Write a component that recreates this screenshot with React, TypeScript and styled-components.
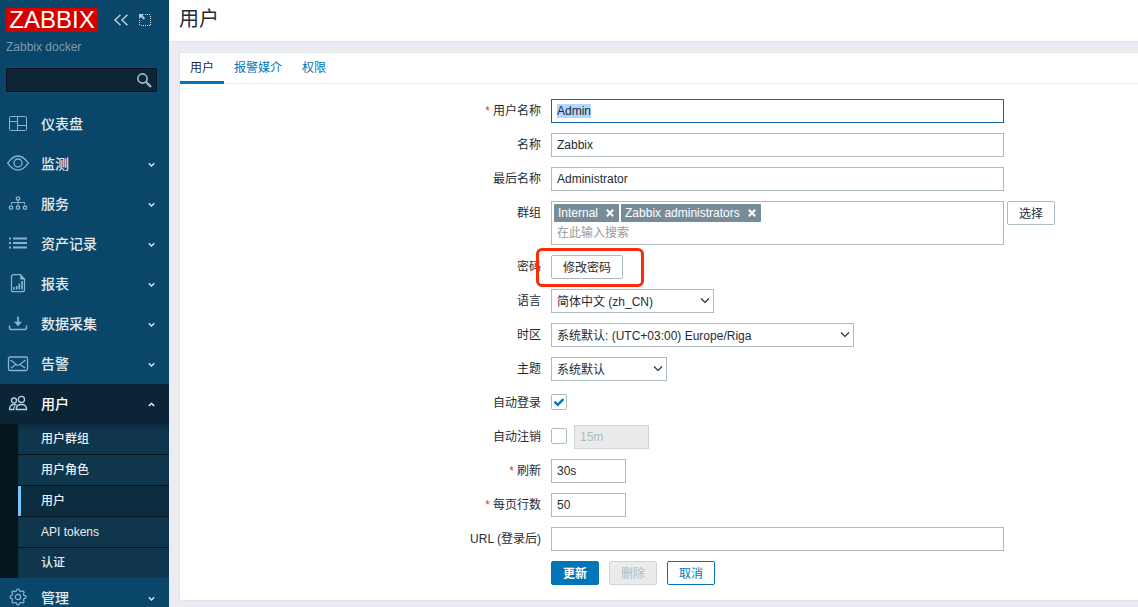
import React, { useEffect, useRef, useState } from "react";
import styled, { createGlobalStyle, css } from "styled-components";

const GlobalStyle = createGlobalStyle`
  *, *::before, *::after { box-sizing: border-box; }
  body {
    margin: 0;
    background: #ebecf1;
    color: #1f2c33;
    font: 12px/18px "Liberation Sans", Arial, "Noto Sans CJK SC", sans-serif;
  }
  button, input, select { font: inherit; color: inherit; margin: 0; }
  ::selection { background: #b3d7fe; color: #1f2c33; }
`;

/* ---------- layout ---------- */

const Page = styled.div`
  display: flex;
  min-height: 100vh;
`;

const Sidebar = styled.aside`
  position: sticky;
  top: 0;
  flex: none;
  width: 169px;
  height: 100vh;
  overflow: hidden;
  background: #0a466a;
  color: #e3eaee;
`;

const Main = styled.main`
  flex: 1;
  min-width: 0;
`;

/* ---------- sidebar header ---------- */

const Brand = styled.div`
  display: flex;
  align-items: center;
  padding: 8px 6px 0;
`;

const Logo = styled.a`
  width: 92px;
  height: 24px;
  margin-right: 15px;
  background: #d40000;
  color: #fff;
  font-size: 24px;
  line-height: 24px;
  text-align: center;
  text-decoration: none;
`;

const IconButton = styled.button`
  display: flex;
  align-items: center;
  justify-content: center;
  width: 16px;
  height: 24px;
  padding: 0;
  border: 0;
  background: none;
  color: #b4cbd8;
  cursor: pointer;
  & + & { margin-left: 8px; }
`;

const ServerName = styled.div`
  padding: 6px 6px 0;
  color: #7d9aab;
`;

const Search = styled.form`
  display: flex;
  height: 24px;
  margin: 12px 12px 12px 6px;
  border: 1px solid #06131c;
  border-radius: 2px;
  background: #0c2637;
`;

const SearchInput = styled.input`
  flex: 1;
  min-width: 0;
  padding: 0 5px;
  border: 0;
  outline: 0;
  background: none;
`;

const SearchButton = styled.button`
  display: flex;
  align-items: center;
  padding: 0 4px;
  border: 0;
  background: none;
  color: #a3bac7;
`;

/* ---------- menu ---------- */

const Menu = styled.ul`
  margin: 0;
  padding: 0;
  list-style: none;
`;

const MenuLink = styled.a<{ $open?: boolean }>`
  display: flex;
  align-items: center;
  height: 40px;
  padding: 0 14px 0 8px;
  background: ${(p) => (p.$open ? "#0b2536" : "transparent")};
  color: ${(p) => (p.$open ? "#fff" : "#e3eaee")};
  font-size: 14px;
  font-weight: 500;
  text-decoration: none;
  > svg:first-child { color: ${(p) => (p.$open ? "#b0d4e8" : "#8ab4cc")}; }
`;

const MenuText = styled.span`
  flex: 1;
  padding-left: 13px;
`;

const SubMenu = styled.ul`
  margin: 0;
  padding: 0 0 0 18px;
  list-style: none;
  background: #06141d;
`;

const SubItem = styled.li`
  & + & { border-top: 1px solid #06141d; }
  &:first-child a { background: linear-gradient(#0c2c40, #0f364c 8px); }
`;

const SubLink = styled.a<{ $selected?: boolean }>`
  display: block;
  height: 30px;
  padding-left: 20px;
  border-left: 3px solid ${(p) => (p.$selected ? "#78c4f8" : "transparent")};
  background: ${(p) => (p.$selected ? "#0b2b3f" : "#0f364c")};
  color: #e9eff2;
  font-weight: 500;
  line-height: 30px;
  text-decoration: none;
`;

/* ---------- page header and tabs ---------- */

const PageHeader = styled.header`
  height: 42px;
  padding: 0 10px;
  border-bottom: 1px solid #dfe4e7;
  background: #fff;
`;

const Title = styled.h1`
  margin: 0;
  font-size: 20px;
  font-weight: 400;
  line-height: 38px;
`;

const Panel = styled.section`
  margin: 10px 0 0 10px;
  border: 1px solid #dfe4e7;
  border-right: 0;
  background: #fff;
`;

const Tabs = styled.nav`
  display: flex;
  height: 31px;
  border-bottom: 1px solid #ebeef0;
`;

const Tab = styled.a<{ $active?: boolean }>`
  height: 31px;
  padding: 0 10px;
  border-bottom: 3px solid ${(p) => (p.$active ? "#0275b8" : "transparent")};
  color: ${(p) => (p.$active ? "#1f2c33" : "#0275b8")};
  line-height: 30px;
  text-decoration: none;
`;

/* ---------- form ---------- */

const Form = styled.form`
  display: grid;
  grid-template-columns: minmax(90px, 361px) minmax(0, 1fr);
  gap: 10px;
  padding: 15px 10px 15px 0;
`;

const Label = styled.label<{ $required?: boolean }>`
  line-height: 24px;
  text-align: right;
  ${(p) =>
    p.$required &&
    css`
      &::before {
        content: "*";
        margin-right: 3px;
        color: #e33734;
      }
    `}
`;

const Field = styled.div<{ $gap?: number }>`
  grid-column: 2;
  display: flex;
  align-items: center;
  gap: ${(p) => p.$gap ?? 0}px;
  min-height: 24px;
`;

const TopField = styled(Field)`
  align-items: flex-start;
`;

const TextInput = styled.input<{ $short?: boolean }>`
  width: ${(p) => (p.$short ? "75px" : "100%")};
  max-width: 453px;
  height: 24px;
  padding: 0 5px;
  border: 1px solid #acbbc2;
  border-radius: 0;
  outline: 0;
  background: #fff;
  &:focus { border-color: #0f66a0; }
  &:disabled {
    border-color: #ccd5d9;
    background: #ebebeb;
    color: #acbbc2;
  }
`;

const MultiSelect = styled.div`
  width: 100%;
  max-width: 453px;
  height: 44px;
  padding: 2px;
  border: 1px solid #acbbc2;
`;

const Tags = styled.div`
  display: flex;
  gap: 2px;
`;

const Tag = styled.span`
  display: flex;
  align-items: center;
  height: 18px;
  padding-left: 4px;
  border-radius: 1px;
  background: #768d99;
  color: #fff;
`;

const TagRemove = styled.button`
  display: flex;
  align-items: center;
  height: 18px;
  padding: 0 5px 0 8px;
  border: 0;
  background: none;
`;

const TagInput = styled.input`
  display: block;
  width: 100%;
  height: 20px;
  padding: 2px 3px 0;
  border: 0;
  outline: 0;
  background: none;
  &::placeholder { color: #999; }
`;

type Kind = "primary" | "secondary" | "plain";

const kinds = {
  primary: css`border-color: #0275b8; background: #0275b8; color: #fff; font-weight: 700;`,
  secondary: css`border-color: #0275b8; background: #fff; color: #0275b8;`,
  plain: css`border-color: #acbbc2; background: #fff; color: #1f2c33;`,
};

const Button = styled.button<{ $kind: Kind }>`
  flex: none;
  height: 24px;
  padding: 2px 11px 0;
  border: 1px solid;
  border-radius: 2px;
  line-height: 20px;
  cursor: pointer;
  ${(p) => kinds[p.$kind]}
  &:disabled {
    border-color: #ccd5d9;
    background: #ebebeb;
    color: #acbbc2;
    cursor: default;
  }
`;

const Marked = styled.div`
  position: relative;
  display: flex;
  &::after {
    content: "";
    position: absolute;
    inset: -7px -21px -8px -15px;
    border: 3px solid #fb2b0b;
    border-radius: 6px;
    pointer-events: none;
  }
`;

const SelectBox = styled.div<{ $width: number }>`
  position: relative;
  width: ${(p) => p.$width}px;
  svg {
    position: absolute;
    top: 8px;
    right: 4px;
    pointer-events: none;
  }
`;

const Select = styled.select`
  appearance: none;
  display: block;
  width: 100%;
  height: 24px;
  padding: 2px 20px 0 5px;
  border: 1px solid #acbbc2;
  border-radius: 0;
  background: #fff;
`;

const CheckBox = styled.span`
  position: relative;
  height: 18px;
  width: 16px;
  svg {
    position: absolute;
    top: 0;
    left: 0;
    display: none;
    pointer-events: none;
  }
  input:checked + svg { display: block; }
`;

const CheckInput = styled.input`
  appearance: none;
  display: block;
  width: 16px;
  height: 16px;
  border: 1px solid #acbbc2;
  border-radius: 2px;
  background: #fff;
`;

/* ---------- icons ---------- */

const IconSvg = styled.svg`
  flex: none;
  overflow: visible;
  fill: none;
  stroke: currentColor;
`;

const gearPath = (() => {
  const points: string[] = [];
  const steps = 96;
  for (let i = 0; i < steps; i++) {
    const a = (i / steps) * Math.PI * 2;
    const r = 7 + 0.9 * Math.tanh(2.2 * Math.cos(8 * a));
    points.push(`${(10 + r * Math.sin(a)).toFixed(2)} ${(9 - r * Math.cos(a)).toFixed(2)}`);
  }
  return `M${points.join("L")}Z`;
})();

const glyphs: Record<string, React.ReactNode> = {
  dashboard: (
    <>
      <rect x="1.5" y="2.5" width="17" height="14" rx="1" />
      <path d="M9.5 2.5v14M1.5 7.5h8M9.5 11.5h9" />
    </>
  ),
  eye: (
    <>
      <path d="M-.3 9.2C3 4.5 6.3 2 10 2s7 2.5 10.3 7.2C17 13.8 13.7 16.2 10 16.2S3 13.8-.3 9.2Z" strokeWidth="1.3" />
      <circle cx="10" cy="9" r="4" strokeWidth="1.3" />
    </>
  ),
  services: (
    <g strokeWidth="1.3">
      <circle cx="10" cy="4.5" r="1.7" />
      <path d="M10 6.5v5M3.5 10.5v-2h13v2" strokeWidth="1" />
      <circle cx="3" cy="13.7" r="1.7" />
      <circle cx="10" cy="13.7" r="1.7" />
      <circle cx="17" cy="13.7" r="1.7" />
    </g>
  ),
  list: <path d="M1 4.5h2M5 4.5h14M1 9h2M5 9h14M1 13.5h2M5 13.5h14" strokeWidth="1.8" />,
  report: (
    <>
      <path d="M5.5.7h7l4 4.5v10.500a2 2 0 0 1-2 2h-9a2 2 0 0 1-2-2V2.700a2 2 0 0 1 2-2Z" strokeWidth="1.3" />
      <path d="M12.5.9v4.300h4Z" fill="currentColor" strokeWidth=".5" />
      <path d="M6 13v2.500M8.7 12v3.500M11.3 9.500v6M14 7v8.500" strokeWidth="1.7" />
    </>
  ),
  download: (
    <>
      <path d="M10 2.500V9" strokeWidth="1.700" />
      <path d="M6.500 8h7L10 12Z" fill="currentColor" strokeWidth=".5" />
      <path d="M1.500 11.500V14a1.500 1.500 0 0 0 1.500 1.500h14a1.500 1.500 0 0 0 1.500-1.500v-2.500" strokeWidth="1.500" />
    </>
  ),
  mail: (
    <>
      <rect x=".5" y="3" width="19" height="13.5" rx="1.5" strokeWidth="1.3" />
      <path d="M2.500 6 8.500 10.700q1.500 1 3 0L17.500 6M3 14l4.500-3.300M17 14l-4.500-3.300" strokeWidth="1.3" />
    </>
  ),
  users: (
    <g strokeWidth="1.3">
      <circle cx="13.4" cy="5.4" r="3.1" />
      <path d="M8.200 15.500c0-3.400 2-5 5.200-5s5.200 1.600 5.200 5Z" />
      <circle cx="6" cy="6.5" r="2.5" />
      <path d="M8.700 11.300C7.900 10.700 7 10.500 6 10.500c-2.800 0-4.500 1.600-4.500 5h4.200c0-1.600.4-2.600 1.200-3.400" />
    </g>
  ),
  gear: (
    <>
      <path d={gearPath} strokeWidth="1.2" />
      <circle cx="10" cy="9" r="2.7" strokeWidth="1.2" />
    </>
  ),
};

const MenuIcon = ({ name }: { name: string }) => (
  <IconSvg width="20" height="20" viewBox="0 0 20 20" aria-hidden="true">
    {glyphs[name]}
  </IconSvg>
);

const Arrow = ({ up }: { up?: boolean }) => (
  <IconSvg width="7" height="6" viewBox="0 0 7 6" aria-hidden="true" strokeWidth="1.3">
    <path d={up ? "M.8 5 3.5 2.3 6.2 5" : "M.8 2.3 3.5 5 6.2 2.3"} />
  </IconSvg>
);

/* ---------- data ---------- */

const menu = [
  { icon: "dashboard", text: "仪表盘", leaf: true },
  { icon: "eye", text: "监测" },
  { icon: "services", text: "服务" },
  { icon: "list", text: "资产记录" },
  { icon: "report", text: "报表" },
  { icon: "download", text: "数据采集" },
  { icon: "mail", text: "告警" },
  { icon: "users", text: "用户", children: ["用户群组", "用户角色", "用户", "API tokens", "认证"] },
  { icon: "gear", text: "管理" },
];

const DropDown = ({ id, width, option }: { id: string; width: number; option: string }) => (
  <SelectBox $width={width}>
    <Select id={id}>
      <option>{option}</option>
    </Select>
    <IconSvg width="10" height="8" viewBox="0 0 10 8" aria-hidden="true" strokeWidth="1.1">
      <path d="M1 1.5 5 5.500 9 1.5" />
    </IconSvg>
  </SelectBox>
);

const Check = ({ id, checked, onChange }: { id: string; checked: boolean; onChange: (v: boolean) => void }) => (
  <CheckBox>
    <CheckInput id={id} type="checkbox" checked={checked} onChange={(e) => onChange(e.target.checked)} />
    <svg width="16" height="16" viewBox="0 0 16 16" fill="none" stroke="#0275b8" strokeWidth="2.4">
      <path d="M3.5 7.7 6.700 10.800 12.500 5.200" />
    </svg>
  </CheckBox>
);

export default function App() {
  const username = useRef<HTMLInputElement>(null);
  const [autoLogin, setAutoLogin] = useState(true);
  const [autoLogout, setAutoLogout] = useState(false);
  const [groups, setGroups] = useState(["Internal", "Zabbix administrators"]);

  useEffect(() => {
    username.current?.focus();
    username.current?.select();
  }, []);

  return (
    <Page>
      <GlobalStyle />
      <Sidebar>
        <Brand>
          <Logo href="#">ZABBIX</Logo>
          <IconButton type="button" aria-label="收起侧边栏">
            <IconSvg width="16" height="12" viewBox="0 0 16 12" strokeWidth="1.5">
              <path d="M7.5.7 2 6l5.5 5.300M14.500.7 9 6l5.500 5.300" />
            </IconSvg>
          </IconButton>
          <IconButton type="button" aria-label="隐藏侧边栏">
            <IconSvg width="12" height="12" viewBox="0 0 12 12">
              <path d="M6 .5h6M11.5 2v10M.5 6v6M2 11.5h9" stroke="#dbe6ec" strokeDasharray="1 1" />
              <path d="M0 0h5L3.500 1.500 6.200 4.200 4.700 5.700 2 3 0 5Z" fill="currentColor" stroke="none" />
            </IconSvg>
          </IconButton>
        </Brand>
        <ServerName>Zabbix docker</ServerName>
        <Search role="search" onSubmit={(e) => e.preventDefault()}>
          <SearchInput type="text" aria-label="搜索" />
          <SearchButton type="submit" aria-label="搜索">
            <IconSvg width="15" height="15" viewBox="0 0 15 15">
              <circle cx="5.5" cy="5.5" r="4.6" strokeWidth="1.6" />
              <path d="m8.800 8.800 5.200 5.200" strokeWidth="2.3" />
            </IconSvg>
          </SearchButton>
        </Search>
        <Menu>
          {menu.map((item) => (
            <li key={item.text}>
              <MenuLink href="#" $open={!!item.children}>
                <MenuIcon name={item.icon} />
                <MenuText>{item.text}</MenuText>
                {!item.leaf && <Arrow up={!!item.children} />}
              </MenuLink>
              {item.children && (
                <SubMenu>
                  {item.children.map((child) => (
                    <SubItem key={child}>
                      <SubLink href="#" $selected={child === "用户"}>{child}</SubLink>
                    </SubItem>
                  ))}
                </SubMenu>
              )}
            </li>
          ))}
        </Menu>
      </Sidebar>

      <Main>
        <PageHeader>
          <Title>用户</Title>
        </PageHeader>
        <Panel>
          <Tabs>
            <Tab href="#" $active>用户</Tab>
            <Tab href="#">报警媒介</Tab>
            <Tab href="#">权限</Tab>
          </Tabs>
          <Form onSubmit={(e) => e.preventDefault()}>
            <Label htmlFor="username" $required>用户名称</Label>
            <Field><TextInput ref={username} id="username" defaultValue="Admin" /></Field>

            <Label htmlFor="name">名称</Label>
            <Field><TextInput id="name" defaultValue="Zabbix" /></Field>

            <Label htmlFor="surname">最后名称</Label>
            <Field><TextInput id="surname" defaultValue="Administrator" /></Field>

            <Label htmlFor="groups">群组</Label>
            <TopField $gap={3}>
              <MultiSelect>
                <Tags>
                  {groups.map((group) => (
                    <Tag key={group}>
                      {group}
                      <TagRemove
                        type="button"
                        aria-label={`删除 ${group}`}
                        onClick={() => setGroups(groups.filter((g) => g !== group))}
                      >
                        <IconSvg width="8" height="8" viewBox="0 0 8 8" strokeWidth="2">
                          <path d="m.8.8 6.400 6.400M7.200.8.8 7.200" />
                        </IconSvg>
                      </TagRemove>
                    </Tag>
                  ))}
                </Tags>
                <TagInput id="groups" placeholder="在此输入搜索" />
              </MultiSelect>
              <Button type="button" $kind="plain">选择</Button>
            </TopField>

            <Label htmlFor="password">密码</Label>
            <Field>
              <Marked>
                <Button id="password" type="button" $kind="plain">修改密码</Button>
              </Marked>
            </Field>

            <Label htmlFor="lang">语言</Label>
            <Field><DropDown id="lang" width={163} option="简体中文 (zh_CN)" /></Field>

            <Label htmlFor="timezone">时区</Label>
            <Field><DropDown id="timezone" width={303} option="系统默认: (UTC+03:00) Europe/Riga" /></Field>

            <Label htmlFor="theme">主题</Label>
            <Field><DropDown id="theme" width={116} option="系统默认" /></Field>

            <Label htmlFor="autologin">自动登录</Label>
            <Field><Check id="autologin" checked={autoLogin} onChange={setAutoLogin} /></Field>

            <Label htmlFor="autologout">自动注销</Label>
            <Field $gap={7}>
              <Check id="autologout" checked={autoLogout} onChange={setAutoLogout} />
              <TextInput $short aria-label="自动注销" defaultValue="15m" disabled={!autoLogout} />
            </Field>

            <Label htmlFor="refresh" $required>刷新</Label>
            <Field><TextInput $short id="refresh" defaultValue="30s" /></Field>

            <Label htmlFor="rows" $required>每页行数</Label>
            <Field><TextInput $short id="rows" defaultValue="50" /></Field>

            <Label htmlFor="url">URL (登录后)</Label>
            <Field><TextInput id="url" /></Field>

            <Field $gap={10}>
              <Button type="submit" $kind="primary">更新</Button>
              <Button type="button" $kind="plain" disabled>删除</Button>
              <Button type="button" $kind="secondary">取消</Button>
            </Field>
          </Form>
        </Panel>
      </Main>
    </Page>
  );
}
